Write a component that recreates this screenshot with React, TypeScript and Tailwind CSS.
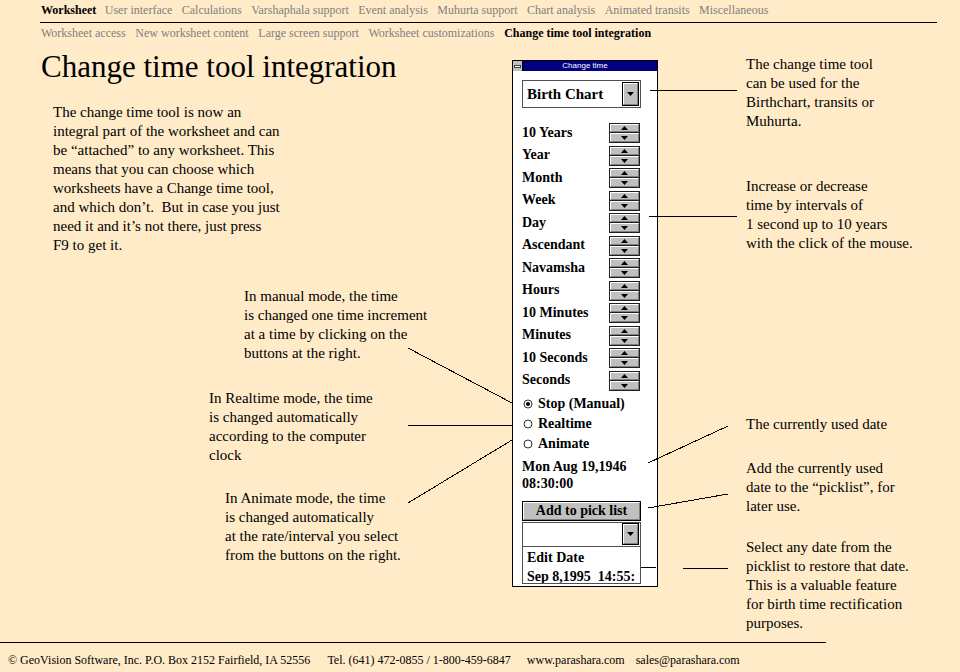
import React from "react";

const topNav = [
  "User interface",
  "Calculations",
  "Varshaphala support",
  "Event analysis",
  "Muhurta support",
  "Chart analysis",
  "Animated transits",
  "Miscellaneous",
];

const subNav = [
  "Worksheet access",
  "New worksheet content",
  "Large screen support",
  "Worksheet customizations",
];

const steps = [
  "10 Years",
  "Year",
  "Month",
  "Week",
  "Day",
  "Ascendant",
  "Navamsha",
  "Hours",
  "10 Minutes",
  "Minutes",
  "10 Seconds",
  "Seconds",
];

function Tri({ up }: { up?: boolean }) {
  return (
    <svg width="7" height="4" viewBox="0 0 7 4" className="block">
      <path d={up ? "M0 4L3.5 0L7 4Z" : "M0 0L7 0L3.5 4Z"} fill="#000" />
    </svg>
  );
}

function ArrowBtn({ tall }: { tall?: boolean }) {
  return (
    <div
      className={`flex w-[17px] items-center justify-center border border-black bg-[#c0c0c0] ${
        tall ? "h-[24px]" : "h-[22px]"
      }`}
    >
      <div className="flex h-full w-full items-center justify-center border border-t-white border-l-white border-r-[#808080] border-b-[#808080]">
        <Tri />
      </div>
    </div>
  );
}

function Spinner() {
  return (
    <div className="mr-[1px] flex h-[20px] w-[31px] flex-col border border-[#202020] bg-[#c0c0c0]">
      <div className="flex flex-1 items-center justify-center border border-t-white border-l-white border-r-[#808080] border-b-[#808080]">
        <Tri up />
      </div>
      <div className="h-[1px] bg-[#202020]" />
      <div className="flex flex-1 items-end justify-center border border-t-white border-l-white border-r-[#808080] border-b-[#808080] pb-[1px]">
        <Tri />
      </div>
    </div>
  );
}

function Radio({ on, label }: { on?: boolean; label: string }) {
  return (
    <div className="flex h-[20px] items-center gap-[5px] pl-[1px]">
      <svg width="10" height="10" viewBox="0 0 10 10" className="block">
        <circle cx="5" cy="5" r="4" fill="#fff" stroke="#303030" strokeWidth="1" />
        {on && <circle cx="5" cy="5" r="2" fill="#000" />}
      </svg>
      <span>{label}</span>
    </div>
  );
}

function ChangeTimeWindow() {
  return (
    <div className="mt-[19px] flex h-[527px] w-[146px] shrink-0 flex-col border border-black bg-white">
      <div className="flex h-[10px] bg-[#000080]">
        <div className="flex w-[10px] items-center justify-center border-r border-black bg-[#c0c0c0]">
          <div className="h-[3px] w-[7px] border border-[#404040] bg-white" />
        </div>
        <div className="flex-1 pr-[10px] text-center font-['Liberation_Sans',sans-serif] text-[8px] leading-[10px] text-white">
          Change time
        </div>
      </div>

      <div className="ml-[9px] flex w-[119px] flex-col text-[14px] font-bold leading-[17px]">
        <div className="mt-[9px] flex h-[28px] items-center justify-between border border-[#505050] pl-[4px] pr-[1px]">
          <span className="text-[15px]">Birth Chart</span>
          <ArrowBtn tall />
        </div>

        <div className="mt-[13.75px] flex flex-col">
          {steps.map((s) => (
            <div key={s} className="flex h-[22.5px] items-center justify-between">
              <span className="-translate-y-[1px]">{s}</span>
              <Spinner />
            </div>
          ))}
        </div>

        <div className="mt-[1.85px] flex flex-col">
          <Radio on label="Stop (Manual)" />
          <Radio label="Realtime" />
          <Radio label="Animate" />
        </div>

        <div className="mt-[4px]">
          <div>Mon Aug 19,1946</div>
          <div>08:30:00</div>
        </div>

        <div className="mt-[9px] h-[20px] border border-black bg-[#c0c0c0]">
          <div className="flex h-full items-center justify-center border border-t-white border-l-white border-r-[#808080] border-b-[#808080]">
            Add to pick list
          </div>
        </div>

        <div className="mt-[1px] flex h-[25px] items-center justify-end border border-[#505050] pr-[1px]">
          <ArrowBtn />
        </div>
        <div className="h-[37px] overflow-hidden whitespace-pre border-x border-b border-[#505050] pl-[4px] pt-[1.5px] leading-[19px]">
          <div>Edit Date</div>
          <div>Sep 8,1995  14:55:</div>
        </div>
      </div>
    </div>
  );
}

function Note({ lines, className }: { lines: string[]; className: string }) {
  return (
    <div className={`whitespace-pre text-[15px] leading-[19px] ${className}`}>
      {lines.map((l) => (
        <div key={l}>{l}</div>
      ))}
    </div>
  );
}

export default function App() {
  return (
    <div className="relative flex h-[672px] w-[960px] flex-col overflow-hidden bg-[#FFEBC8] font-['Liberation_Serif','Times_New_Roman',serif] text-black">
      <nav className="ml-[40px] w-[897px] whitespace-nowrap text-[12px] leading-[16px] text-[#808080]">
        <div className="flex h-[23px] gap-[9.4px] border-b border-black pl-[1px] pt-[2px]">
          <span className="mr-[-1px] font-bold text-black">Worksheet</span>
          {topNav.map((n) => (
            <span key={n}>{n}</span>
          ))}
        </div>
        <div className="flex gap-[9.7px] pl-[1px] pt-[2px]">
          {subNav.map((n) => (
            <span key={n}>{n}</span>
          ))}
          <span className="font-bold text-black">Change time tool integration</span>
        </div>
      </nav>

      <div className="flex">
        <div className="w-[512px] shrink-0">
          <h1 className="ml-[41px] mt-[10px] whitespace-nowrap text-[31px] font-normal leading-[31px]">
            Change time tool integration
          </h1>
          <Note
            className="ml-[53px] mt-[21px]"
            lines={[
              "The change time tool is now an",
              "integral part of the worksheet and can",
              "be \u201cattached\u201d to any worksheet. This",
              "means that you can choose which",
              "worksheets have a Change time tool,",
              "and which don\u2019t.  But in case you just",
              "need it and it\u2019s not there, just press",
              "F9 to get it.",
            ]}
          />
          <Note
            className="ml-[244px] mt-[32px]"
            lines={[
              "In manual mode, the time",
              "is changed one time increment",
              "at a time by clicking on the",
              "buttons at the right.",
            ]}
          />
          <Note
            className="ml-[209px] mt-[26px]"
            lines={[
              "In Realtime mode, the time",
              "is changed automatically",
              "according to the computer",
              "clock",
            ]}
          />
          <Note
            className="ml-[225px] mt-[24px]"
            lines={[
              "In Animate mode, the time",
              "is changed automatically",
              "at the rate/interval you select",
              "from the buttons on the right.",
            ]}
          />
        </div>

        <ChangeTimeWindow />

        <div className="pl-[88px]">
          <Note
            className="mt-[14px]"
            lines={[
              "The change time tool",
              "can be used for the",
              "Birthchart, transits or",
              "Muhurta.",
            ]}
          />
          <Note
            className="mt-[46px]"
            lines={[
              "Increase or decrease",
              "time by intervals of",
              "1 second up to 10 years",
              "with the click of the mouse.",
            ]}
          />
          <Note className="mt-[162px]" lines={["The currently used date"]} />
          <Note
            className="mt-[25px]"
            lines={[
              "Add the currently used",
              "date to the \u201cpicklist\u201d, for",
              "later use.",
            ]}
          />
          <Note
            className="mt-[22px]"
            lines={[
              "Select any date from the",
              "picklist to restore that date.",
              "This is a valuable feature",
              "for birth time rectification",
              "purposes.",
            ]}
          />
        </div>
      </div>

      <footer className="mt-auto w-[826px] border-t border-black pb-[4px] pl-[8px] pt-[9px] text-[12px] leading-[16px]">
        <div className="flex whitespace-nowrap">
          <span>© GeoVision Software, Inc. P.O. Box 2152 Fairfield, IA 52556</span>
          <span className="ml-[17px]">Tel. (641) 472-0855 / 1-800-459-6847</span>
          <span className="ml-[16px]">www.parashara.com</span>
          <span className="ml-[11px]">sales@parashara.com</span>
        </div>
      </footer>

      {/* callout leader lines */}
      <svg
        className="pointer-events-none absolute inset-0"
        width="960"
        height="672"
        viewBox="0 0 960 672"
        shapeRendering="crispEdges"
      >
        <g stroke="#000" strokeWidth="1">
          <line x1="650" y1="90.5" x2="737" y2="90.5" />
          <line x1="649" y1="216.5" x2="737" y2="216.5" />
          <line x1="408" y1="348" x2="512" y2="403" />
          <line x1="408" y1="425.5" x2="512" y2="425.5" />
          <line x1="408" y1="503" x2="512" y2="440" />
          <line x1="648" y1="463" x2="728" y2="426" />
          <line x1="648" y1="508" x2="728" y2="494" />
          <line x1="641" y1="567.5" x2="656" y2="567.5" />
          <line x1="683" y1="568.5" x2="728" y2="568.5" />
        </g>
      </svg>
    </div>
  );
}
